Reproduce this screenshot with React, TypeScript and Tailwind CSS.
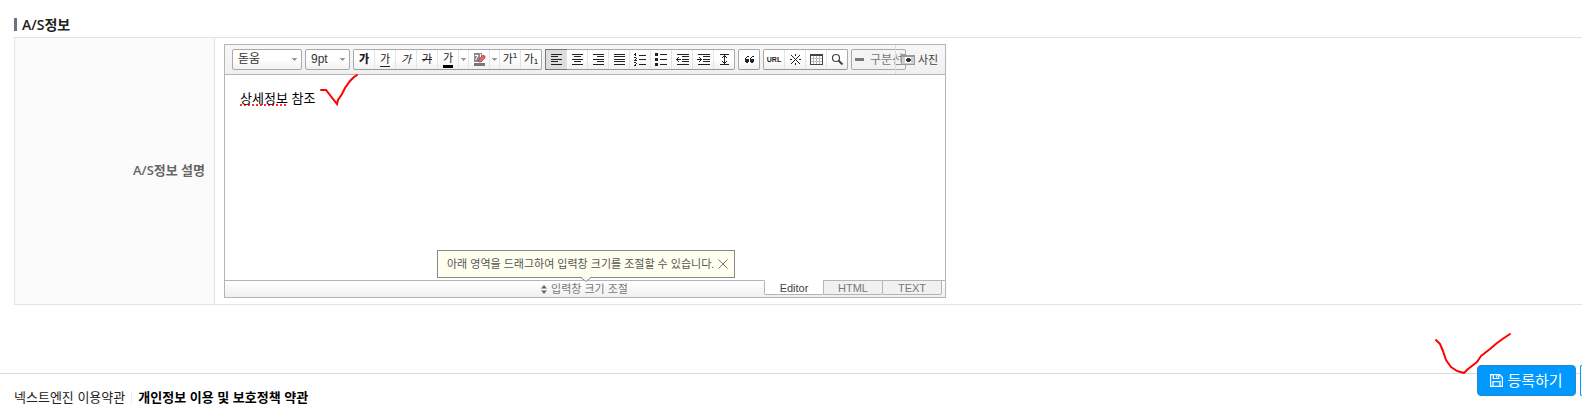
import { useState } from "react";
import type { ReactNode } from "react";

const CELL = "h-[19px] shrink-0 flex items-center justify-center border-l border-[#e4e4e4] first:border-l-0";

function Group({ children }: { children: ReactNode }) {
  return (
    <div className="flex shrink-0 h-[21px] rounded-[2px] border border-[#a9a9a9] border-b-[#999999] bg-gradient-to-b from-white from-50% to-[#f1f1f1]">
      {children}
    </div>
  );
}

function Tool({ label, active, children }: { label: string; active?: boolean; children: ReactNode }) {
  return (
    <button
      type="button"
      aria-label={label}
      aria-pressed={active}
      className={`${CELL} w-[21px] first:w-[20px] ${active ? "bg-[#dddddb] outline outline-1 outline-[#777777]" : ""}`}
    >
      {children}
    </button>
  );
}

function Drop({ label }: { label: string }) {
  return (
    <button type="button" aria-label={label} className={`${CELL} w-[10px]`}>
      <Caret />
    </button>
  );
}

function Caret() {
  return (
    <svg width="5" height="3" viewBox="0 0 5 3" shapeRendering="crispEdges" fill="#999">
      <path d="M0 0h5v1H0zM1 1h3v1H1zM2 2h1v1H2z" />
    </svg>
  );
}

// Small bitmap-like icon, one path per button
function Pix({ d }: { d: string }) {
  return (
    <svg width="13" height="13" viewBox="0 0 13 13" shapeRendering="crispEdges" fill="#222">
      <path d={d} />
    </svg>
  );
}

function Picker({ label, value, width }: { label: string; value: string; width: string }) {
  return (
    <div className={`relative shrink-0 ${width}`}>
      <select
        aria-label={label}
        className="block w-full h-[21px] appearance-none rounded-[2px] border border-[#a9a9a9] bg-gradient-to-b from-white from-50% to-[#f1f1f1] pl-[5px] text-[12px] leading-[19px] text-[#333]"
      >
        <option>{value}</option>
      </select>
      <span className="pointer-events-none absolute right-[5px] top-[9px]"><Caret /></span>
    </div>
  );
}

function Ga({ className }: { className?: string }) {
  return <span className={`text-[11px] leading-[13px] text-[#222] ${className ?? ""}`}>가</span>;
}

const ALIGN = [
  { label: "왼쪽 정렬", d: "M1 1h11v1H1zM1 3h7v1H1zM1 6h11v1H1zM1 8h7v1H1zM1 11h11v1H1z" },
  { label: "가운데 정렬", d: "M1 1h11v1H1zM3 3h7v1H3zM1 6h11v1H1zM3 8h7v1H3zM1 11h11v1H1z" },
  { label: "오른쪽 정렬", d: "M1 1h11v1H1zM5 3h7v1H5zM1 6h11v1H1zM5 8h7v1H5zM1 11h11v1H1z" },
  { label: "양쪽 정렬", d: "M1 1h11v1H1zM1 3h11v1H1zM1 6h11v1H1zM1 8h11v1H1zM1 11h11v1H1z" },
  { label: "번호매기기", d: "M5 2h7v1H5zM5 6h7v1H5zM5 11h7v1H5zM1 0h1v3H1zM0 1h1v1H0zM0 4h2v1H0zM2 5h1v1H2zM1 6h1v1H1zM0 7h3v1H0zM0 9h2v1H0zM2 10h1v1H2zM1 11h1v1H1zM0 12h2v1H0z" },
  { label: "글머리기호", d: "M0 0h3v3H0zM0 5h3v3H0zM0 10h3v3H0zM5 1h7v1H5zM5 6h7v1H5zM5 11h7v1H5z" },
  { label: "내어쓰기", d: "M1 1h12v1H1zM6 3h7v1H6zM6 6h7v1H6zM6 8h7v1H6zM1 11h12v1H1zM0 6h5v1H0zM1 5h1v3H1zM2 4h1v1H2zM2 8h1v1H2z" },
  { label: "들여쓰기", d: "M1 1h12v1H1zM6 3h7v1H6zM6 6h7v1H6zM6 8h7v1H6zM1 11h12v1H1zM0 6h5v1H0zM3 5h1v3H3zM2 4h1v1H2zM2 8h1v1H2z" },
  { label: "줄간격", d: "M2 1h9v1H2zM2 11h9v1H2zM6 2h1v9H6zM5 3h3v1H5zM4 4h1v1H4zM8 4h1v1H8zM5 9h3v1H5zM4 8h1v1H4zM8 8h1v1H8z" },
];

function Toolbar() {
  return (
    <div className="flex h-[30px] items-center gap-[3px] border-b border-[#b5b5b5] bg-gradient-to-b from-[#f7f7f7] to-[#f0f0f0] pl-[7px]">
      <Picker label="글꼴" value="돋움" width="w-[70px]" />
      <Picker label="글자 크기" value="9pt" width="w-[45px]" />
      <Group>
        <Tool label="굵게"><Ga className="font-black" /></Tool>
        <Tool label="밑줄"><Ga className="border-b border-[#222]" /></Tool>
        <Tool label="기울임꼴"><Ga className="italic" /></Tool>
        <Tool label="취소선"><Ga className="line-through" /></Tool>
        <Tool label="글자색"><Ga className="border-b-3 border-black" /></Tool>
        <Drop label="글자색 더보기" />
        <Tool label="배경색">
          <svg width="13" height="13" viewBox="0 0 13 13">
            <path fill="#8a8a8a" d="M1 0h8v9H1z" />
            <path stroke="#fff" fill="none" d="M2 2.500h3L2.500 7M7.500 1v6" />
            <path fill="#dd6666" stroke="#a33" strokeWidth=".6" d="M5 7l5-5 2 1v2L8 9H6z" />
            <path fill="#777" d="M1 10h11v3H1z" />
          </svg>
        </Tool>
        <Drop label="배경색 더보기" />
        <Tool label="위첨자"><Ga /><sup className="text-[8px] leading-none">1</sup></Tool>
        <Tool label="아래첨자"><Ga /><sub className="text-[8px] leading-none">1</sub></Tool>
      </Group>
      <Group>
        {ALIGN.map((a, i) => (
          <Tool key={a.label} label={a.label} active={i === 0}><Pix d={a.d} /></Tool>
        ))}
      </Group>
      <Group>
        <Tool label="인용구">
          <Pix d="M4 3h2v1H4zM3 4h1v1H3zM2 5h1v1H2zM2 6h4v3H2zM3 9h2v1H3zM9 3h2v1H9zM8 4h1v1H8zM7 5h1v1H7zM7 6h4v3H7zM8 9h2v1H8z" />
        </Tool>
      </Group>
      <Group>
        <Tool label="링크"><span className="text-[7px] font-bold leading-none text-[#222]">URL</span></Tool>
        <Tool label="특수기호">
          <Pix d="M6 1h1v2H6zM6 10h1v2H6zM1 6h2v1H1zM10 6h2v1H10zM6 6h1v1H6zM2 2h1v1H2zM3 3h1v1H3zM4 4h1v1H4zM5 5h1v1H5zM7 7h1v1H7zM8 8h1v1H8zM9 9h1v1H9zM10 10h1v1H10zM10 2h1v1H10zM9 3h1v1H9zM8 4h1v1H8zM7 5h1v1H7zM5 7h1v1H5zM4 8h1v1H4zM3 9h1v1H3zM2 10h1v1H2z" />
        </Tool>
        <Tool label="표">
          <svg width="13" height="13" viewBox="0 0 13 13" shapeRendering="crispEdges">
            <path fill="#bbb" d="M3 3h1v8H3zM6 3h1v8H6zM9 3h1v8H9zM1 5h11v1H1zM1 8h11v1H1z" />
            <path fill="#444" d="M0 1h13v2H0zM0 3h1v8H0zM12 3h1v8H12zM0 11h13v1H0z" />
          </svg>
        </Tool>
        <Tool label="찾기">
          <svg width="13" height="13" viewBox="0 0 13 13" fill="none" stroke="#444">
            <circle cx="5" cy="5" r="3.500" strokeWidth="1.200" />
            <path d="M7.500 7.500L11.500 11.500" strokeWidth="2" />
          </svg>
        </Tool>
      </Group>
      <button
        type="button"
        className="flex h-[21px] w-[55px] shrink-0 items-center gap-[6px] rounded-[2px] border border-[#a9a9a9] pl-[3px] text-[12px] leading-[18px] whitespace-nowrap text-[#777]"
      >
        <span className="h-[3px] w-[9px] shrink-0 bg-[#777]" />
        구분선
      </button>
      <button
        type="button"
        className="-ml-[14px] flex h-full shrink-0 items-center gap-[3px] border-l border-[#dddddd] pl-[5px] text-[11px] leading-[18px] text-[#444]"
      >
        <Camera />
        사진
      </button>
    </div>
  );
}

function Camera() {
  return (
    <svg width="14" height="11" viewBox="0 0 14 11" shapeRendering="crispEdges">
      <path fill="#999" d="M1 0h4v1H1zM0 1h14v10H0z" />
      <path fill="#cfcfcf" d="M1 3h12v7H1z" />
      <path fill="#fff" d="M4 3h6v6H4z" />
      <path fill="#333" d="M6 4h3v1H6zM5 5h5v2H5zM6 7h3v1H6z" />
    </svg>
  );
}

const TABS = ["Editor", "HTML", "TEXT"];

function Editor() {
  const [tab, setTab] = useState("Editor");
  return (
    <div className="relative w-full max-w-[722px] border border-[#b5b5b5] bg-white">
      <Toolbar />
      <div
        role="textbox"
        aria-labelledby="as-label"
        contentEditable
        suppressContentEditableWarning
        spellCheck={false}
        className="h-[205px] px-[15px] pt-[14px] text-[13px] leading-[20px] text-black"
      >
        <span className="underline decoration-dotted decoration-red-500 decoration-2 underline-offset-1">상세정보</span> 참조
      </div>
      <svg className="pointer-events-none absolute left-[94px] top-[28px]" width="42" height="34" viewBox="0 0 42 34" fill="none" stroke="#ff0000" strokeWidth="2" strokeLinecap="round">
        <path d="M2 17h5l11 14 1-4 4-6 3-6 5-7 4-4 3-2" />
      </svg>

      <div className="flex h-[17px] border-t border-[#b5b5b5] bg-gradient-to-b from-white to-[#f0f0f0] pr-[3px]">
        <button type="button" className="flex flex-1 items-center justify-center gap-1 pl-[180px] text-[11px] leading-[16px] text-[#777]">
          <svg width="6" height="9" viewBox="0 0 6 9" fill="#666"><path d="M3 0l3 3.500H0zM3 9L0 5.500h6z" /></svg>
          입력창 크기 조절
        </button>
        <div role="tablist" className="-mt-px flex">
          {TABS.map((t) => (
            <button
              key={t}
              type="button"
              role="tab"
              aria-selected={t === tab}
              onClick={() => setTab(t)}
              className={`h-[15px] w-[60px] not-first:-ml-px rounded-b-[2px] border border-[#b5b5b5] text-[11px] leading-[12px] ${t === tab ? "border-t-white bg-white text-[#444]" : "bg-[#f1f1f1] text-[#777]"}`}
            >
              {t}
            </button>
          ))}
        </div>
      </div>

      <div role="tooltip" className="absolute bottom-[19px] left-[212px] flex h-[28px] items-center gap-1 border border-[#888888] bg-[#fffff0] pl-[9px] pr-[6px] text-[11px] leading-[16px] whitespace-nowrap text-[#555]">
        아래 영역을 드래그하여 입력창 크기를 조절할 수 있습니다.
        <button type="button" aria-label="닫기">
          <svg width="10" height="10" viewBox="0 0 10 10" stroke="#777"><path d="M.5.5l9 9M9.500.5l-9 9" /></svg>
        </button>
        <svg className="absolute -bottom-[5px] left-[143px]" width="10" height="5" viewBox="0 0 10 5">
          <path fill="#fffff0" stroke="#888" d="M0 .5L5 4.500L10 .5" />
          <path fill="#fffff0" d="M1 0h8v1H1z" />
        </svg>
      </div>
    </div>
  );
}

function SaveIcon() {
  return (
    <svg width="13" height="13" viewBox="0 0 13 13" fill="none" stroke="#fff" strokeWidth="1.200">
      <path d="M.6.6H9.500L12.400 3.500V12.400H.6z" />
      <path d="M3.300.6V4.500H8.800V.6M6.800 1.200V3.500M3 12.400V7.600H10V12.400" />
    </svg>
  );
}

export default function App() {
  return (
    <div className="overflow-x-hidden bg-white font-['Liberation_Sans','Noto_Sans_CJK_KR',sans-serif]">
      <main className="pl-[14px]">
        <h2 className="flex h-[37px] items-center gap-[5px] pt-3 font-['Open_Sans','Noto_Sans_CJK_KR',sans-serif] text-[14px] leading-[20px] font-semibold text-[#222]">
          <span className="h-[13px] w-[3px] bg-[#6c757d]" />
          A/S정보
        </h2>
        <table className="w-full border-collapse border-y border-l border-[#e1e1e8]">
          <tbody>
            <tr>
              <th id="as-label" scope="row" className="w-[200px] border-r border-[#e1e1e8] bg-[#fbfbfb] pr-[9px] text-right font-['Open_Sans','Noto_Sans_CJK_KR',sans-serif] text-[13px] font-semibold text-[#666]">
                A/S정보 설명
              </th>
              <td className="py-[6px] pl-[9px]">
                <Editor />
              </td>
            </tr>
          </tbody>
        </table>
      </main>

      <footer className="relative mt-[68px] border-t border-[#d9d9d9] pt-[14px] pb-[6px] pl-[14px]">
        <nav className="flex items-center text-[13px] leading-[20px]">
          <a href="#terms" className="text-[#222]">넥스트엔진 이용약관</a>
          <span className="mx-[6px] h-3 w-px bg-[#eeeef5]" />
          <a href="#privacy" className="font-bold text-black">개인정보 이용 및 보호정책 약관</a>
        </nav>
        <div className="absolute -top-[9px] right-0 flex gap-1">
          <button type="submit" className="flex h-[31px] w-[99px] items-center justify-center gap-1 rounded-[4px] border border-[#2e86c8] bg-[#0099ff] text-[15px] leading-[20px] text-white">
            <SaveIcon />
            등록하기
          </button>
          <button type="button" aria-label="목록" className="h-[31px] w-[2px] rounded-l-[2px] border-y border-l border-[#0099ff] bg-white" />
        </div>
        <svg className="pointer-events-none absolute -top-[43px] right-[69px]" width="80" height="44" viewBox="0 0 80 44" fill="none" stroke="#ff0000" strokeWidth="2" strokeLinecap="round" strokeLinejoin="round">
          <path d="M3 9l4 4 3 7 3 9 5 7 6 4 7 2 4-4 9-7 4-6 9-7 7-6 7-5 6-4" />
        </svg>
      </footer>
    </div>
  );
}
